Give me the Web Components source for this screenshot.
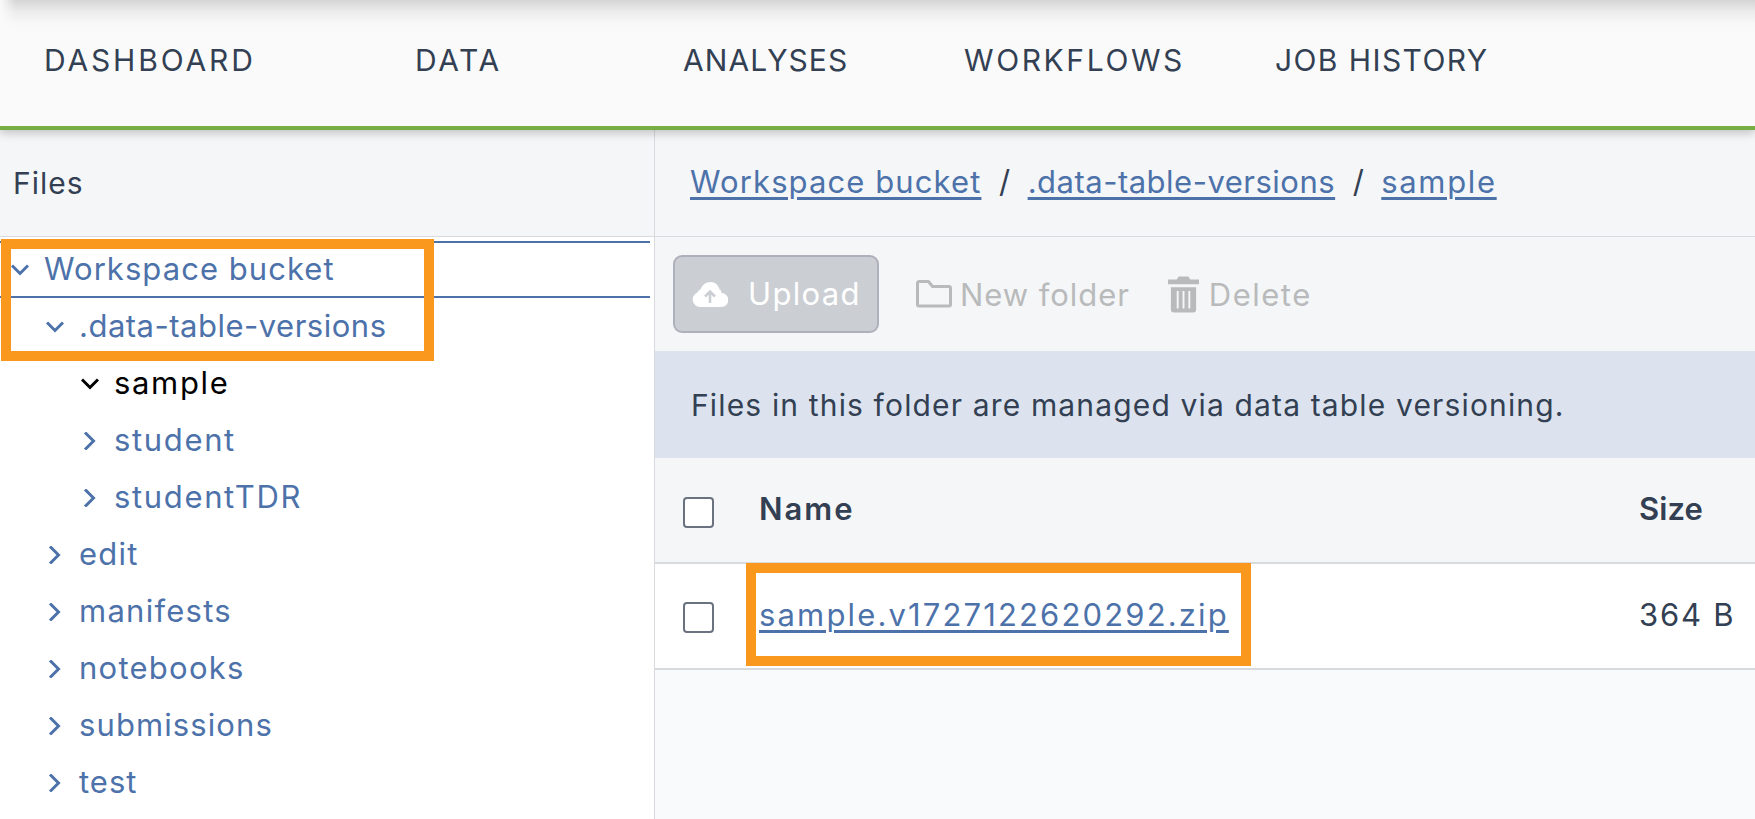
<!DOCTYPE html>
<html>
<head>
<meta charset="utf-8">
<title>Files</title>
<style>
  html, body { margin: 0; height: 819px; overflow: hidden; background: #fff; }
  body { font-family: Inter, "Liberation Sans", sans-serif; color: #333f52; }
  .page { position: relative; display: flex; flex-direction: column; width: 1755px; height: 819px; }
  .body { display: flex; flex: 1; min-height: 0; }
</style>
</head>
<body>
<div class="page">
  <app-nav>
    <nav-item style="width:371px;letter-spacing:2.85px">DASHBOARD</nav-item>
    <nav-item style="width:268px">DATA</nav-item>
    <nav-item style="width:281px;letter-spacing:1.05px">ANALYSES</nav-item>
    <nav-item style="width:311px">WORKFLOWS</nav-item>
    <nav-item style="letter-spacing:1.4px">JOB HISTORY</nav-item>
  </app-nav>
  <div class="body">
    <file-tree>
      <tree-row level="0" open boxed style="letter-spacing:1.05px">Workspace bucket</tree-row>
      <tree-row level="1" open style="letter-spacing:.5px">.data-table-versions</tree-row>
      <tree-row level="2" open current style="letter-spacing:1.65px">sample</tree-row>
      <tree-row level="2" style="letter-spacing:1.65px">student</tree-row>
      <tree-row level="2" style="letter-spacing:1.65px">studentTDR</tree-row>
      <tree-row level="1">edit</tree-row>
      <tree-row level="1">manifests</tree-row>
      <tree-row level="1">notebooks</tree-row>
      <tree-row level="1" style="letter-spacing:1.1px">submissions</tree-row>
      <tree-row level="1" style="letter-spacing:1px">test</tree-row>
    </file-tree>
    <file-browser>
      <bread-crumbs>
        <a style="letter-spacing:1.1px">Workspace bucket</a><span>/</span><a style="letter-spacing:.5px">.data-table-versions</a><span>/</span><a style="letter-spacing:1.65px">sample</a>
      </bread-crumbs>
      <file-toolbar></file-toolbar>
      <info-banner>Files in this folder are managed via data table versioning.</info-banner>
      <file-table>
        <file-row head name="Name" size="Size"></file-row>
        <file-row name="sample.v1727122620292.zip" size="364 B"></file-row>
      </file-table>
    </file-browser>
  </div>
  <!-- orange call-outs drawn on top of the screenshot -->
  <note-box style="left:1px;top:239px;width:433px;height:122px"></note-box>
  <note-box style="left:746px;top:563px;width:505px;height:103px"></note-box>
</div>

<script type="text/javascript">
  const FS = 31;

  function make(name, html, setup) {
    const template = document.createElement('template');
    template.innerHTML = html;
    customElements.define(name, class extends HTMLElement {
      constructor() {
        super();
        this.attachShadow({mode: 'open'});
        this.shadowRoot.appendChild(template.content.cloneNode(true));
      }
      connectedCallback() {
        if (setup) setup(this, this.shadowRoot);
      }
    });
  }

  make('app-nav', `
    <style>
      :host { display: flex; align-items: center; position: relative; z-index: 2; box-sizing: border-box;
        height: 130px; padding: 0 0 6px 44px; border-bottom: 4px solid #76ae43;
        background: linear-gradient(90deg, #fafafa, rgba(250,250,250,0) 16px),
                    linear-gradient(#d5d5d5, #ececec 12px, #f8f8f8 24px, #fafafa 32px);
        box-shadow: 0 3px 9px rgba(0,0,0,.22); }
    </style>
    <slot></slot>`);

  make('nav-item', `
    <style>
      :host { display: block; font-size: 30px; color: #333f52; letter-spacing: 2.6px; white-space: nowrap; }
    </style>
    <slot></slot>`);

  make('file-tree', `
    <style>
      :host { display: block; box-sizing: border-box; width: 655px; border-right: 1px solid #d8dade; background: #fff; }
      .head { box-sizing: border-box; height: 107px; padding-left: 13px; display: flex; align-items: center;
        background: #f5f6f8; border-bottom: 1px solid #d8dade; font-size: 30px; letter-spacing: 1px; }
      .rows { padding: 4px 4px 0 0; }
    </style>
    <div class="head">Files</div>
    <div class="rows"><slot></slot></div>`);

  make('tree-row', `
    <style>
      :host { display: flex; align-items: center; box-sizing: border-box; height: 57px; font-size: ${FS}px;
        letter-spacing: 1.25px; color: #4d72aa; white-space: nowrap; }
      :host([boxed]) { border-top: 2px solid #4d72aa; border-bottom: 2px solid #4d72aa; }
      :host([current]) { color: #000; }
      .ic { flex: none; width: 33px; display: flex; margin-left: 11px; }
      svg { width: 18px; height: 18px; fill: none; stroke: currentColor; stroke-width: 3; }
      .text { position: relative; top: -1px; }
    </style>
    <span class="ic"><svg viewBox="0 0 18 18"><path id="ch" d="M4 .5l8.500 8.500-8.500 8.500"/></svg></span>
    <span class="text"><slot></slot></span>`,
    (el, root) => {
      const level = +el.getAttribute('level');
      el.style.paddingLeft = (level * 35) + 'px';
      if (el.hasAttribute('open')) root.getElementById('ch').setAttribute('d', 'M1 4.500l8 8 8-8');
    });

  make('file-browser', `
    <style>
      :host { display: flex; flex-direction: column; flex: 1; min-width: 0; background: #f5f6f8; }
    </style>
    <slot></slot>`);

  make('bread-crumbs', `
    <style>
      :host { display: flex; align-items: center; box-sizing: border-box; height: 107px; padding: 0 0 3px 35px;
        border-bottom: 1px solid #d8dade; font-size: ${FS}px; color: #333f52; white-space: nowrap; }
      ::slotted(a) { color: #4d72aa; text-decoration: underline; text-decoration-thickness: 2.500px; text-underline-offset: 4px; }
      ::slotted(span) { margin: 0 17.500px; }
    </style>
    <slot></slot>`);

  make('file-toolbar', `
    <style>
      :host { display: flex; align-items: center; box-sizing: border-box; height: 114px; padding-left: 18px;
        font-size: ${FS}px; color: #b9babb; }
      .upload { display: flex; align-items: center; box-sizing: border-box; width: 206px; height: 78px; padding-left: 17px;
        background: #cbced3; border: 2px solid #aeb1bb; border-radius: 9px; color: #fff; letter-spacing: 1.35px; }
      .upload svg { width: 36px; height: 25px; margin-right: 20px; }
      .upload span { position: relative; top: -1px; }
      .item { display: flex; align-items: center; }
      .folder { margin-left: 37px; letter-spacing: .95px; }
      .folder svg { width: 36px; height: 28px; margin-right: 8px; }
      .trash { margin-left: 38px; letter-spacing: 1.5px; }
      .trash svg { width: 31px; height: 37px; margin-right: 10px; }
    </style>
    <div class="upload">
      <svg viewBox="0 0 36 25"><path fill="#fff" d="M8 25a7.500 7.500 0 0 1-2.500-14.500C6 9 7 8 8.500 7.500 10 3 14 0 18.500 0c4.500 0 8 3 9 7.500 1.500.5 2 2 2 3.500a7 7 0 0 1-.5 14z"/><path fill="none" stroke="#cbced3" stroke-width="2.600" d="M18 21V10M13 14.500l5-5 5 5"/></svg>
      <span>Upload</span>
    </div>
    <div class="item folder">
      <svg viewBox="0 0 36 28"><path fill="none" stroke="#b9babb" stroke-width="3" stroke-linejoin="round" d="M1.500 3a1.500 1.500 0 0 1 1.500-1.500h9.500l4 5h16.500a1.500 1.500 0 0 1 1.500 1.500v16.500a1.500 1.500 0 0 1-1.500 1.500H3a1.500 1.500 0 0 1-1.500-1.500z"/></svg>
      <span>New folder</span>
    </div>
    <div class="item trash">
      <svg viewBox="0 0 32 37"><path fill="#b9babb" d="M11 0h10l2 3h9v5H0V3h9zM3 11h26v23a3 3 0 0 1-3 3H6a3 3 0 0 1-3-3z"/><path stroke="#f5f6f8" stroke-width="2" d="M10 15v18M16 15v18M22 15v18"/></svg>
      <span>Delete</span>
    </div>`);

  make('info-banner', `
    <style>
      :host { display: flex; align-items: center; box-sizing: border-box; height: 107px; padding-left: 36px;
        background: #dce3ee; font-size: 30px; letter-spacing: 1.15px; color: #333f52; white-space: nowrap; }
    </style>
    <slot></slot>`);

  make('file-table', `
    <style>
      :host { display: block; flex: 1; background: #f9fafc; }
    </style>
    <slot></slot>`);

  make('file-row', `
    <style>
      :host { display: grid; grid-template-columns: 76px 880px 1fr; align-items: center; box-sizing: border-box;
        height: 106px; padding-left: 28px; background: #fff; border-bottom: 2px solid #d8dade; font-size: ${FS}px; color: #333f52; white-space: nowrap; }
      :host([head]) { background: #f5f6f8; font-weight: 600; }
      :host([head]) #name { letter-spacing: 2px; }
      :host([head]) #size { letter-spacing: .1px; }
      :host([head]) .box { margin-top: 4px; }
      #size { letter-spacing: 1.8px; }
      #name, #size { position: relative; top: -2px; }
      .box { width: 31px; height: 31px; margin-top: 2px; box-sizing: border-box; background: #fff; border: 2px solid #6a7280; border-radius: 4px; }
      a { color: #4d72aa; letter-spacing: 2.150px; text-decoration: underline; text-decoration-thickness: 2.500px; text-underline-offset: 4px; }
    </style>
    <span class="box"></span>
    <span id="name"></span>
    <span id="size"></span>`,
    (el, root) => {
      const name = root.getElementById('name');
      if (el.hasAttribute('head')) {
        name.textContent = el.getAttribute('name');
      } else {
        const a = document.createElement('a');
        a.textContent = el.getAttribute('name');
        name.appendChild(a);
      }
      root.getElementById('size').textContent = el.getAttribute('size');
    });

  make('note-box', `
    <style>
      :host { position: absolute; display: block; box-sizing: border-box; border: 10px solid #fa981d; z-index: 3; }
    </style>`);
</script>
</body>
</html>
